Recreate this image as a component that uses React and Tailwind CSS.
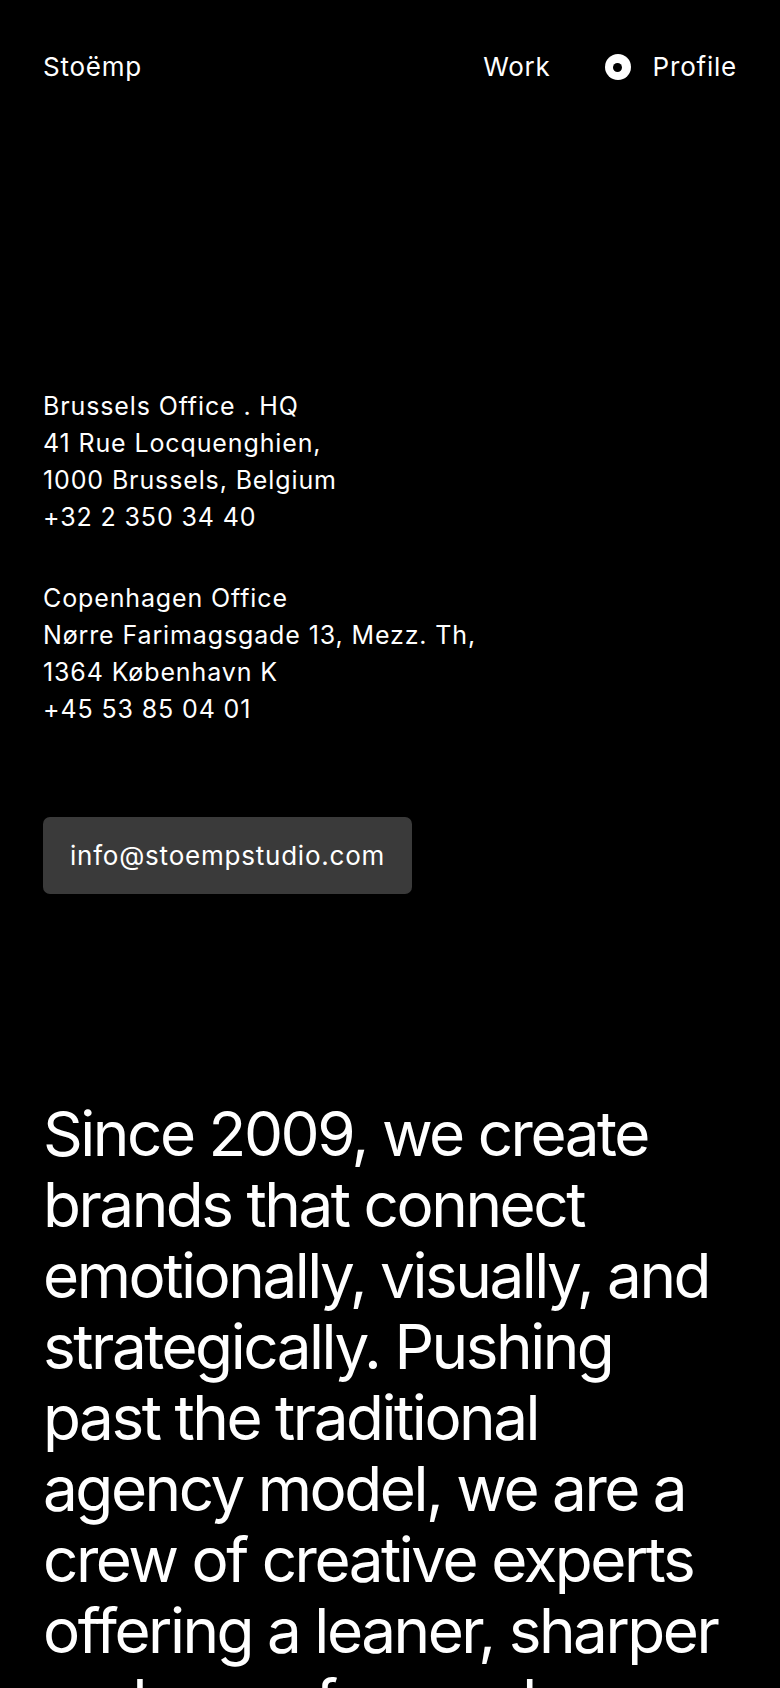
import React from 'react';

const offices = [
  {
    name: 'Brussels Office . HQ',
    lines: ['41 Rue Locquenghien,', '1000 Brussels, Belgium', '+32 2 350 34 40'],
  },
  {
    name: 'Copenhagen Office',
    lines: ['Nørre Farimagsgade 13, Mezz. Th,', '1364 København K', '+45 53 85 04 01'],
  },
];

function App() {
  return (
    <div
      className="min-h-screen bg-black text-white antialiased overflow-hidden"
      style={{ fontFamily: 'Inter, "Noto Sans", sans-serif' }}
    >
      {/* Header */}
      <header className="flex items-center justify-between px-[43px] pt-[52px] text-[26px] leading-[30px] tracking-[0.03em]">
        <a href="#">Stoëmp</a>
        <nav className="flex items-center">
          <a href="#">Work</a>
          <span className="ml-[54px] mr-[22px] flex h-[26px] w-[26px] items-center justify-center rounded-full bg-white">
            <span className="h-[9px] w-[9px] rounded-full bg-black" />
          </span>
          <a href="#">Profile</a>
        </nav>
      </header>

      {/* Contact */}
      <section className="px-[43px] pt-[306px]">
        <div className="flex flex-col gap-[44px] text-[25px] leading-[37px] tracking-[0.035em]">
          {offices.map((o) => (
            <div key={o.name}>
              <p>{o.name}</p>
              {o.lines.map((l) => (
                <p key={l}>{l}</p>
              ))}
            </div>
          ))}
        </div>

        <a
          href="#"
          className="mt-[89px] inline-flex h-[77px] items-center rounded-[7px] bg-[#3a3a3a] px-[27px] text-[26px] tracking-[0.03em]"
        >
          info@stoempstudio.com
        </a>
      </section>

      {/* Intro */}
      <section className="px-[43px] pt-[204px]">
        <p className="text-[62px] leading-[71px] tracking-[-0.04em]">
          Since 2009, we create brands that connect emotionally, visually, and strategically. Pushing past the
          traditional agency model, we are a crew of creative experts offering a leaner, sharper and more focused
          approach to branding.
        </p>
      </section>
    </div>
  );
}

export default App;
